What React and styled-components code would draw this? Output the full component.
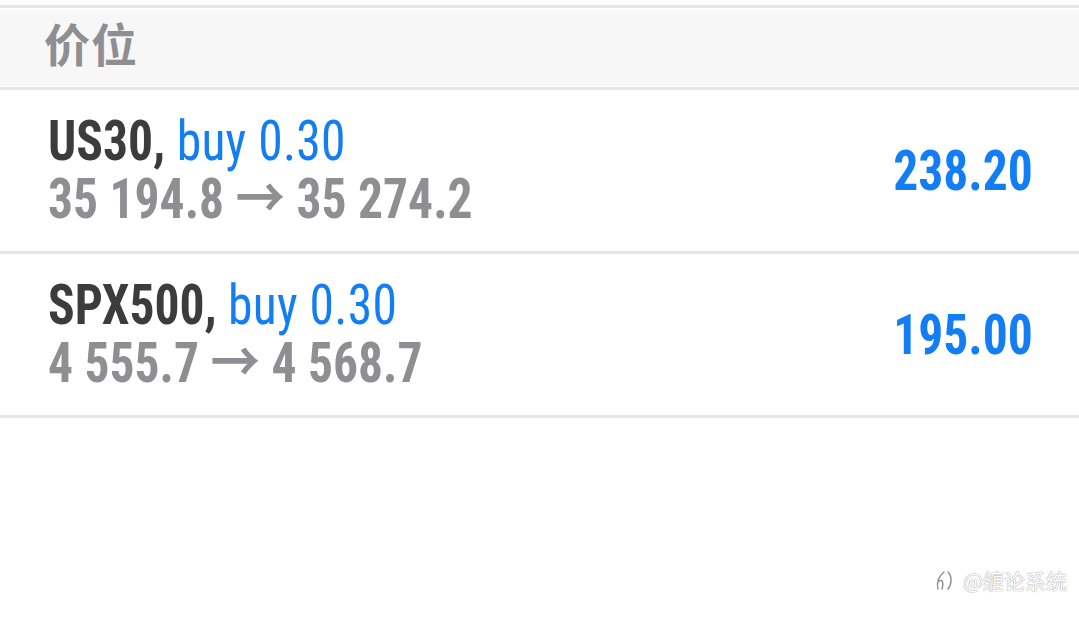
import React from 'react';
import styled, {createGlobalStyle} from "styled-components";

const GlobalStyle = createGlobalStyle`
  html, body {
    margin: 0;
    padding: 0;
    background: #fff;
  }
  body {
    width: 1079px;
    height: 623px;
    overflow: hidden;
    font-family: "Roboto Condensed", Roboto, "Noto Sans CJK SC", sans-serif;
  }
`

const Page = styled.div`
  position: relative;
  width: 1079px;
  height: 623px;
  padding-top: 5px;
  box-sizing: border-box;
`

const Header = styled.div`
  display: flex;
  align-items: center;
  padding: 0 0 11px 44px;
  box-sizing: border-box;
  height: 85px;
  background: #f7f7f7;
  border-top: 3px solid #e6e6e6;
  border-bottom: 3px solid #e6e6e6;
  box-shadow: inset 0 2px 0 #fff, inset 0 -1px 0 #fff;
  color: #8e8e93;
  font-family: "Noto Sans CJK SC", sans-serif;
  font-size: 46px;
  font-weight: 700;
  letter-spacing: 1px;
`

const Row = styled.div`
  display: flex;
  align-items: center;
  justify-content: space-between;
  height: 161px;
  padding: 0 46px 0 48px;
  border-bottom: 3px solid #e6e6e6;
`

const Info = styled.div`
  display: flex;
  flex-direction: column;
  padding-bottom: 1px;
`

/* no condensed face installed: squeeze Roboto to the condensed widths */
const Line = styled.div`
  font-size: 56px;
  line-height: 58px;
  white-space: nowrap;
  transform: scaleX(0.885);
  transform-origin: left center;
  color: ${p => p.muted ? '#8e8e93' : '#3c3c3c'};
  font-weight: 700;
`

const Side = styled.span`
  color: #137ef4;
  font-weight: 400;
  letter-spacing: 0.3px;
`

const Profit = styled.div`
  font-size: 56px;
  font-weight: 700;
  transform: scaleX(0.885);
  transform-origin: right center;
  color: #137ef4;
`

const Mark = styled.div`
  position: absolute;
  right: 12px;
  bottom: 28px;
  display: flex;
  align-items: center;
  gap: 8px;
  font-family: "Noto Sans CJK SC", sans-serif;
  font-size: 21px;
  color: #fff;
  text-shadow: 0 0 1px #999, 0 0 1px #999;
`

const positions = [
  {symbol: 'US30', volume: '0.30', open: '35 194.8', close: '35 274.2', profit: '238.20'},
  {symbol: 'SPX500', volume: '0.30', open: '4 555.7', close: '4 568.7', profit: '195.00'},
];

const App = () => {
  return (
    <Page>
      <GlobalStyle />
      <Header>价位</Header>
      {positions.map(p => (
        <Row key={p.symbol}>
          <Info>
            <Line>{p.symbol}, <Side>buy {p.volume}</Side></Line>
            <Line muted>{p.open} → {p.close}</Line>
          </Info>
          <Profit>{p.profit}</Profit>
        </Row>
      ))}
      <Mark>
        <svg width="20" height="22" viewBox="0 0 20 22" fill="none" stroke="#8a8a8a" strokeWidth="1.4" strokeLinecap="round">
          <path d="M3 20 C1 14 4 7 9 3 M4 12 C7 10 9 13 7 20 M13 3 C17 7 17 15 13 20" />
        </svg>
        <span>@缠论系统</span>
      </Mark>
    </Page>
  );
};

export default App;
